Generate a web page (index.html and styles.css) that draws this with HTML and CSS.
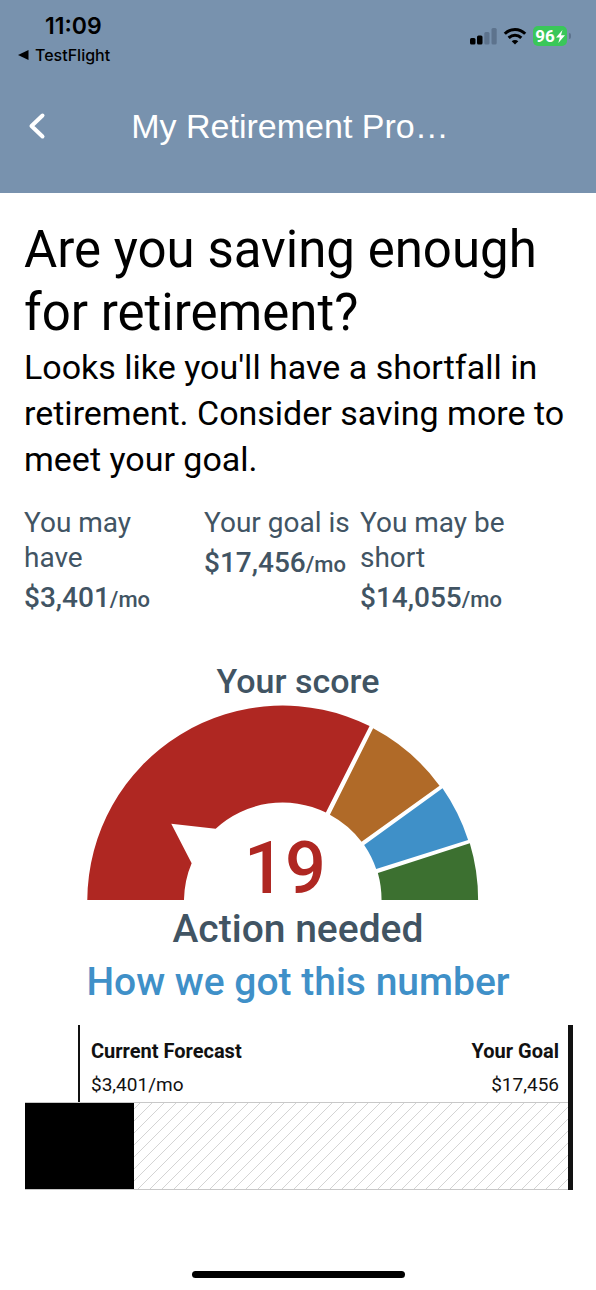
FILE: index.html
```html
<!DOCTYPE html>
<html lang="en">
<head>
<meta charset="utf-8">
<meta name="viewport" content="width=device-width, initial-scale=1">
<title>My Retirement Progress</title>
<link rel="stylesheet" href="styles.css">
</head>
<body>
<header class="top">
  <div class="status">
    <div class="status-left">
      <span class="clock">11:09</span>
      <a class="return" href="#"><svg width="11" height="10" viewBox="0 0 11 10" aria-hidden="true"><path d="M0 5 10.500 0V10Z"/></svg>TestFlight</a>
    </div>
    <div class="status-right">
      <svg width="27" height="18" viewBox="0 0 27 18" aria-label="Signal">
        <rect x="0" y="11" width="5.500" height="6.500" rx="1.500"/>
        <rect x="7" y="8.500" width="5.500" height="9" rx="1.500"/>
        <rect class="dim" x="14.300" y="5" width="5.200" height="12.500" rx="1.500"/>
        <rect class="dim" x="21.500" y="1" width="5.200" height="16.500" rx="1.500"/>
      </svg>
      <svg width="24" height="18" viewBox="0 0 24 18" aria-label="Wi-Fi">
        <path class="wave" d="M1.800 6.800C7.500 .9 16.500 .9 22.200 6.800M5.700 10.900C9.300 7.300 14.700 7.300 18.300 10.900"/>
        <path d="M12 17.500 8.700 14.200C10.600 12.500 13.400 12.500 15.300 14.200Z"/>
      </svg>
      <span class="battery">96<svg width="9" height="13" viewBox="0 0 9 13" aria-hidden="true"><path d="M6.500 0 0 7.500H3.800L2.300 13 9 5.300H5Z"/></svg></span>
    </div>
  </div>
  <nav class="bar">
    <button class="back" aria-label="Back"><svg width="18" height="28" viewBox="0 0 18 28" aria-hidden="true"><path d="M14.500 3.500 3.500 14 14.500 24.500"/></svg></button>
    <div class="bar-title">My Retirement Pro…</div>
  </nav>
</header>
<main class="content">
  <h1 class="headline">Are you saving enough for retirement?</h1>
  <p class="lead">Looks like you'll have a shortfall in retirement. Consider saving more to meet your goal.</p>
  <dl class="figures">
    <div class="figure have"><dt>You may have</dt><dd>$3,401<small>/mo</small></dd></div>
    <div class="figure"><dt>Your goal is</dt><dd>$17,456<small>/mo</small></dd></div>
    <div class="figure"><dt>You may be short</dt><dd>$14,055<small>/mo</small></dd></div>
  </dl>
  <section class="score">
    <h2 class="score-title">Your score</h2>
    <svg class="gauge" viewBox="87 706 392 194" role="img" aria-label="Score 19">
      <path class="red" d="M87.300 900A195.500 195.500 0 0 1 369.700 726L326 812.500A99 99 0 0 0 215.700 828.700L171.300 823.700 191.700 863.300Q184.500 880 184 900Z"/>
      <path class="orange" d="M373.300 728.300A195.500 195.500 0 0 1 439.700 785.700L361.700 841.700A99 99 0 0 0 330 814.700Z"/>
      <path class="blue" d="M442.700 788.300A195.500 195.500 0 0 1 468.300 840L376.300 869A99 99 0 0 0 364.300 845Z"/>
      <path class="green" d="M470 843.300A195.500 195.500 0 0 1 478.300 900H381.700A99 99 0 0 0 378 873Z"/>
      <text class="value" x="285" y="893">19</text>
    </svg>
    <p class="verdict">Action needed</p>
    <a class="more" href="#">How we got this number</a>
  </section>
  <section class="forecast">
    <div class="labels">
      <div class="label current"><strong>Current Forecast</strong><span>$3,401/mo</span></div>
      <div class="label goal"><strong>Your Goal</strong><span>$17,456</span></div>
    </div>
    <div class="track">
      <div class="fill"></div>
      <svg class="hatch" aria-hidden="true">
        <defs><pattern id="stripes" width="12" height="12" patternUnits="userSpaceOnUse"><path d="M-2 8 8-2M-2 20 20-2M8 20 20 8" /></pattern></defs>
        <rect width="100%" height="100%" fill="url(#stripes)"/>
      </svg>
    </div>
  </section>
</main>
<div class="home"></div>
</body>
</html>
```
FILE: styles.css
```css
* { box-sizing: border-box; }
body {
  margin: 0;
  min-height: 100vh;
  display: flex;
  flex-direction: column;
  background: #fff;
  color: #000;
  font-family: Roboto, "Liberation Sans", sans-serif;
}
.top { background: #7892ae; padding-bottom: 25px; }
.status { display: flex; justify-content: space-between; padding: 12px 24px 0 18px; height: 84px; font-family: Inter, sans-serif; }
.status-left { display: flex; flex-direction: column; gap: 4px; }
.clock { font-size: 23px; line-height: 28px; font-weight: 600; padding-left: 27px; }
.return { display: flex; align-items: center; gap: 6px; font-size: 16px; line-height: 22px; font-weight: 500; color: #000; text-decoration: none; }
.status-right { display: flex; align-items: center; gap: 6px; height: 48px; }
.dim { fill: #5d738d; }
.wave { fill: none; stroke: #000; stroke-width: 3; }
.battery { position: relative; display: flex; align-items: center; justify-content: center; gap: 1px; width: 34px; height: 20px; margin-right: 5px; border-radius: 5px; background: #3ac759; color: #fff; font-family: Roboto, sans-serif; font-size: 17px; font-weight: 700; }
.battery svg { fill: #fff; }
.battery::after { content: ""; position: absolute; right: -4px; top: 7px; width: 2px; height: 6px; border-radius: 0 3px 3px 0; background: #5d738d; }
.bar { display: grid; grid-template-columns: 48px 1fr 64px; align-items: center; padding: 0 20px; height: 84px; }
.back { display: flex; padding: 4px 8px; border: 0; background: none; }
.back path { fill: none; stroke: #fff; stroke-width: 4; stroke-linecap: round; stroke-linejoin: round; }
.bar-title { color: #fff; font-family: "Liberation Sans", Arial, sans-serif; font-size: 34px; line-height: 40px; text-align: center; white-space: nowrap; }
.content { flex: 1; padding: 25px 24px 0; }
.headline { margin: 0; font-size: 51px; line-height: 63px; font-weight: 400; }
.lead { margin: 0; font-size: 34px; line-height: 46px; }
.figures { display: grid; grid-template-columns: 180px 156px 156px; margin: 23px 0 0; color: #415463; font-size: 28px; line-height: 35px; }
.have { padding-right: 24px; }
.figure dd { margin: 0; padding-top: 6px; line-height: 34px; font-weight: 500; white-space: nowrap; }
.figure small { font-size: 22px; }
.score { display: flex; flex-direction: column; align-items: center; margin-top: 43px; color: #415463; }
.score-title { margin: 0; padding-bottom: 4px; font-size: 34px; line-height: 42px; font-weight: 500; }
.gauge { display: block; width: 71.5%; margin-right: 30px; overflow: visible; }
.value { fill: #af2722; font-size: 72px; line-height: 1; font-weight: 500; text-anchor: middle; }
.red { fill: #af2722; }
.orange { fill: #b06a28; }
.blue { fill: #3f90c8; }
.green { fill: #3c7030; }
.verdict { margin: 0; padding-top: 3px; font-size: 39px; line-height: 52px; font-weight: 500; }
.more { color: #3f90c8; font-size: 39px; line-height: 54px; font-weight: 500; text-decoration: none; }
.forecast { margin: 16px -1px 0 1px; border-right: 5px solid #111; }
.labels { display: flex; justify-content: space-between; margin-left: 53px; border-left: 2px solid #111; padding: 9px 9px 0 11px; font-size: 20px; line-height: 34px; color: #111; }
.label { display: flex; flex-direction: column; }
.label span { font-size: 19px; }
.goal { text-align: right; }
.track { display: flex; height: 88px; border: 1px solid #c8c8c8; border-width: 1px 0; }
.fill { width: 20%; background: #000; }
.hatch { display: block; flex: 1; height: 100%; min-width: 0; }
.hatch path { fill: none; stroke: #d4d4d4; stroke-width: 1; }
.home { align-self: center; width: 213px; height: 7px; margin-bottom: 12px; border-radius: 4px; background: #000; }
```
